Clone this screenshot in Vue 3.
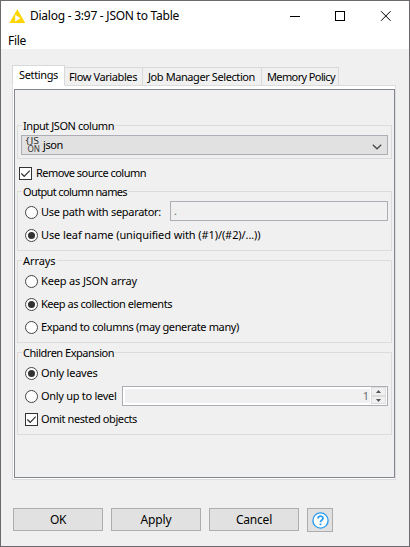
<script setup>
import { ref } from 'vue'

const tabs = [
  { label: 'Settings', w: 39 },
  { label: 'Flow Variables', w: 68 },
  { label: 'Job Manager Selection', w: 107 },
  { label: 'Memory Policy', w: 68 },
]
const active = ref(0)
const removeSource = ref(true)
const omitNested = ref(true)
const naming = ref('leaf')
const arrays = ref('collection')
const expansion = ref('leaves')
const arrayOptions = [
  { value: 'keep', label: 'Keep as JSON array', w: 96 },
  { value: 'collection', label: 'Keep as collection elements', w: 131 },
  { value: 'expand', label: 'Expand to columns (may generate many)', w: 198 },
]
const buttons = [
  { label: 'OK', w: 16 },
  { label: 'Apply', w: 31 },
  { label: 'Cancel', w: 36 },
]

// Spreads a label's letters so that it takes the given width.
const vFit = {
  mounted(el, { value }) {
    const natural = el.getBoundingClientRect().width
    el.style.letterSpacing = (value - natural) / el.textContent.length + 'px'
  },
}
</script>

<template>
  <div class="window">
    <header class="titlebar">
      <svg class="logo" width="17" height="15" viewBox="0 0 17 15">
        <path d="M8.3 0.3 16.2 14H0.4Z" fill="#ffd500" />
        <path d="M6.2 5.800 11.500 9.300 6.2 12.400Z" fill="#fff" />
      </svg>
      <span class="title"><span v-fit="149">Dialog - 3:97 - JSON to Table</span></span>
      <svg class="controls" width="104" height="12" viewBox="0 0 104 12" fill="none" stroke="#000">
        <path d="M1 6.5h10" />
        <rect x="46.5" y="1.5" width="9" height="9" />
        <path d="M92 1.2l9.6 9.6M101.600 1.2 92 10.800" />
      </svg>
    </header>
    <nav class="menu"><span v-fit="18">File</span></nav>

    <div class="tabs">
      <div v-for="(t, i) in tabs" :key="t.label" class="tab" :class="{ active: i === active }" @click="active = i">
        <span v-fit="t.w">{{ t.label }}</span>
      </div>
    </div>

    <main class="pane">
      <div class="inner">
        <section class="group first">
          <h2><span v-fit="91">Input JSON column</span></h2>
          <div class="combo">
            <svg class="json-icon" width="18" height="16" viewBox="0 0 18 16">
              <text x="0.500" y="6.500" textLength="13.500" lengthAdjust="spacingAndGlyphs">{JS</text>
              <text x="2.500" y="15" textLength="12.500" lengthAdjust="spacingAndGlyphs">ON</text>
            </svg>
            <span v-fit="20">json</span>
            <svg class="chevron" width="10" height="6" viewBox="0 0 10 6" fill="none" stroke="#444" stroke-width="1.2">
              <path d="M.8.8 5 4.800 9.200.8" />
            </svg>
          </div>
        </section>

        <label class="row remove" @click="removeSource = !removeSource">
          <span class="check"><svg v-if="removeSource" width="11" height="11" viewBox="0 0 11 11"><path d="M1.300 5.500 4.200 8.300 9.700 2.600" /></svg></span>
          <span class="text" v-fit="110">Remove source column</span>
        </label>

        <section class="group naming">
          <h2><span v-fit="104">Output column names</span></h2>
          <div class="row">
            <label class="option" @click="naming = 'path'">
              <span class="radio" :class="{ on: naming === 'path' }"></span>
              <span class="text" v-fit="120">Use path with separator:</span>
            </label>
            <div class="input">.</div>
          </div>
          <label class="row" @click="naming = 'leaf'">
            <span class="radio" :class="{ on: naming === 'leaf' }"></span>
            <span class="text" v-fit="219.500">Use leaf name (uniquified with (#1)/(#2)/...))</span>
          </label>
        </section>

        <section class="group">
          <h2><span v-fit="32.500">Arrays</span></h2>
          <label v-for="o in arrayOptions" :key="o.value" class="row" @click="arrays = o.value">
            <span class="radio" :class="{ on: arrays === o.value }"></span>
            <span class="text" v-fit="o.w">{{ o.label }}</span>
          </label>
        </section>

        <section class="group">
          <h2><span v-fit="91">Children Expansion</span></h2>
          <label class="row" @click="expansion = 'leaves'">
            <span class="radio" :class="{ on: expansion === 'leaves' }"></span>
            <span class="text" v-fit="56.500">Only leaves</span>
          </label>
          <div class="row">
            <label class="option" @click="expansion = 'level'">
              <span class="radio" :class="{ on: expansion === 'level' }"></span>
              <span class="text" v-fit="75.500">Only up to level</span>
            </label>
            <div class="spinner">
              <span class="value">1</span>
              <span class="steps">
                <span class="step"><svg width="5" height="3" viewBox="0 0 5 3"><path d="M0 3 2.500 0 5 3Z" /></svg></span>
                <span class="step"><svg width="5" height="3" viewBox="0 0 5 3"><path d="M0 0 2.500 3 5 0Z" /></svg></span>
              </span>
            </div>
          </div>
          <label class="row" @click="omitNested = !omitNested">
            <span class="check"><svg v-if="omitNested" width="11" height="11" viewBox="0 0 11 11"><path d="M1.300 5.500 4.200 8.300 9.700 2.600" /></svg></span>
            <span class="text" v-fit="96">Omit nested objects</span>
          </label>
        </section>
      </div>
    </main>

    <footer class="actions">
      <button v-for="b in buttons" :key="b.label" class="btn"><span v-fit="b.w">{{ b.label }}</span></button>
      <button class="btn help">
        <svg width="17" height="17" viewBox="0 0 17 17" fill="none" stroke="#2c9df0">
          <circle cx="8.500" cy="8.500" r="7.600" fill="#fff" stroke-width="1.400" />
          <path d="M6 6.600C6 3.300 11 3.400 11 6.300 11 8.100 8.500 8.100 8.500 10.300" stroke-width="1.800" />
          <path d="M8.500 11.500v1.700" stroke-width="1.900" />
        </svg>
      </button>
    </footer>
  </div>
</template>

<style>
body {
  margin: 0;
}
</style>

<style scoped>
* {
  box-sizing: border-box;
}
.window {
  width: 410px;
  height: 547px;
  display: flex;
  flex-direction: column;
  border: 1px solid #6b696b;
  background: #f0f0f0;
  color: #000;
  font: 11px/14px "Noto Sans", sans-serif;
  white-space: nowrap;
}
.titlebar {
  display: flex;
  align-items: center;
  height: 30px;
  flex: none;
  padding-left: 8px;
  background: #fff;
  font-size: 12px;
}
.logo {
  margin-right: 4px;
}
.controls {
  margin-left: auto;
  margin-right: 16px;
}
.menu {
  height: 18px;
  flex: none;
  padding: 3px 0 0 7px;
  background: #fff;
  font-size: 12px;
}
.tabs {
  display: flex;
  align-items: flex-end;
  height: 21px;
  flex: none;
  margin: 16px 0 -1px 11px;
}
.tab {
  height: 19px;
  padding: 2px 5px 0 4px;
  border: 1px solid #d9d9d9;
  border-left: 0;
}
.tab:nth-child(3) {
  padding-left: 5px;
  padding-right: 6px;
}
.tab:nth-child(4) {
  padding-left: 5px;
  padding-right: 3px;
}
.tab.active {
  z-index: 1;
  height: 21px;
  padding: 2px 6px 0;
  border-left: 1px solid #d9d9d9;
  border-bottom-color: #fff;
  background: #fff;
}
.pane {
  width: 384px;
  height: 395px;
  flex: none;
  margin-left: 11px;
  padding: 3px 0 1px 1px;
  border: 1px solid #dcdcdc;
  background: #fff;
}
.inner {
  height: 389px;
  padding: 35px 2px 0;
  border: 1px solid #828790;
  background: #f0f0f0;
}
.group {
  height: 83px;
  margin-bottom: 9px;
  padding: 9px 3px 0;
  border: 1px solid #dcdcdc;
}
.group.first {
  height: 34px;
  margin-bottom: 3px;
}
.group.naming {
  height: 60px;
}
.group h2 {
  width: fit-content;
  height: 14px;
  margin: -16px 0 2px 1px;
  padding: 0 1px;
  background: #f0f0f0;
  font: inherit;
}
.group .row {
  padding-left: 4px;
}
.row {
  display: flex;
  align-items: center;
  gap: 3px;
  height: 23px;
}
.row.remove {
  margin-bottom: 6px;
  padding-left: 2px;
  gap: 4px;
}
.option {
  display: flex;
  align-items: center;
  gap: 3px;
  height: 23px;
}
.text {
  padding-bottom: 1px;
}
.radio {
  display: grid;
  place-items: center;
  width: 13px;
  height: 13px;
  flex: none;
  border: 1px solid #444;
  border-radius: 50%;
  background: #fff;
}
.radio.on::after {
  content: "";
  width: 7px;
  height: 7px;
  border-radius: 50%;
  background: #333;
}
.check {
  display: grid;
  place-items: center;
  width: 13px;
  height: 13px;
  flex: none;
  border: 1px solid #333;
  background: #fff;
}
.check path {
  fill: none;
  stroke: #333;
  stroke-width: 1.2;
}
.combo {
  display: flex;
  align-items: center;
  height: 20px;
  padding: 0 5px 0 3px;
  border: 1px solid #adadb5;
  background: #e1e1e1;
}
.json-icon {
  fill: #333;
  font-size: 8px;
}
.chevron {
  margin: 3px 0 0 auto;
}
.input {
  width: 218px;
  height: 20px;
  margin: 0 0 3px auto;
  padding: 2px 3px;
  border: 1px solid #adadb5;
  color: #6d6d6d;
}
.spinner {
  display: flex;
  width: 266px;
  height: 20px;
  margin: 0 0 1px auto;
  border: 1px solid #adadb5;
  background: #fff;
}
.value {
  flex: 1;
  margin: 2px 1px 2px 2px;
  padding-right: 1px;
  background: #f0f0f0;
  color: #6d6d6d;
  text-align: right;
}
.steps {
  display: grid;
  grid-template-rows: 9px 8px;
  width: 16px;
  padding-right: 1px;
}
.step {
  display: grid;
  place-items: center;
  border: 1px solid #dcdcdc;
  background: #f0f0f0;
  fill: #555;
}
.step svg {
  display: block;
}
.actions {
  display: flex;
  gap: 8px;
  margin: 28px 0 0 12px;
}
.btn {
  width: 90px;
  height: 23px;
  padding: 0;
  border: 1px solid #adadad;
  background: #e1e1e1;
  color: #000;
  font: 12px/18px "Noto Sans", sans-serif;
}
.btn.help {
  display: grid;
  place-items: center;
  width: 26px;
  height: 24px;
}
</style>
